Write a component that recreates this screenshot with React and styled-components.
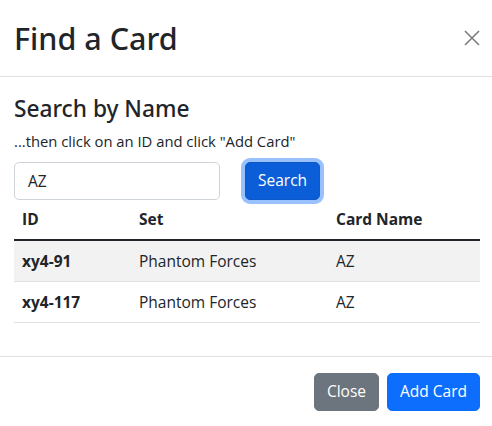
import React, { useState } from "react";
import styled, { createGlobalStyle } from "styled-components";

const GlobalStyle = createGlobalStyle`
  html, body {
    margin: 0;
    padding: 0;
    background: #fff;
  }
  body {
    font-family: "Open Sans", "Noto Sans", sans-serif;
    color: #212529;
    font-size: 16px;
    line-height: 1.5;
  }
  * {
    box-sizing: border-box;
  }
`;

const Modal = styled.div`
  width: 492px;
  height: 426px;
  display: flex;
  flex-direction: column;
  background: #fff;
`;

const Header = styled.div`
  height: 77px;
  display: flex;
  align-items: center;
  justify-content: space-between;
  padding: 0 8px 0 14px;
  border-bottom: 1px solid #dee2e6;
`;

const Title = styled.h1`
  margin: 0;
  font-family: "Noto Sans", "Open Sans", sans-serif;
  font-size: 30.5px;
  font-weight: 500;
  line-height: 1.2;
`;

const CloseIcon = styled.button`
  width: 24px;
  height: 24px;
  padding: 4px;
  border: 0;
  background: transparent;
  opacity: 0.5;
  display: flex;
  align-items: center;
  justify-content: center;
  cursor: pointer;
`;

const Body = styled.div`
  padding: 20px 12px 16px 14px;
`;

const Subtitle = styled.h5`
  margin: 0;
  font-family: "Noto Sans", "Open Sans", sans-serif;
  font-size: 22.7px;
  font-weight: 500;
  line-height: 24px;
`;

const Hint = styled.p`
  margin: 8px 0 0;
  font-size: 14.8px;
  line-height: 24px;
`;

const SearchRow = styled.form`
  display: flex;
  align-items: center;
  gap: 25px;
  margin-top: 9px;
`;

const Input = styled.input`
  width: 206px;
  height: 38px;
  padding: 6px 13px;
  font: inherit;
  font-size: 15.5px;
  color: #212529;
  border: 1px solid #ced4da;
  border-radius: 5px;
  outline: none;
`;

const Button = styled.button`
  height: 38px;
  padding: 0 12px;
  font: inherit;
  font-size: 15.5px;
  color: #fff;
  background: ${(p) => p.$bg};
  border: 1px solid ${(p) => p.$border || p.$bg};
  border-radius: 5px;
  box-shadow: ${(p) => (p.$focus ? "0 0 0 4px rgba(49, 132, 253, 0.5)" : "none")};
  cursor: pointer;
`;

const Table = styled.table`
  width: 100%;
  border-collapse: collapse;
  font-size: 15.5px;
`;

const Th = styled.th`
  text-align: left;
  font-weight: 700;
  padding: 8px 8px;
  line-height: 23px;
  width: ${(p) => p.$w || "auto"};
  border-bottom: 2px solid #212529;
`;

const Row = styled.tr`
  background: ${(p) => (p.$striped ? "#f2f2f2" : "#fff")};
`;

const Td = styled.td`
  padding: 8px 8px;
  line-height: 24px;
  font-weight: ${(p) => (p.$bold ? 700 : 400)};
  border-bottom: 1px solid #dee2e6;
`;

const Footer = styled.div`
  margin-top: auto;
  height: 70px;
  display: flex;
  justify-content: flex-end;
  align-items: flex-start;
  gap: 8px;
  padding: 16px 12px 0 14px;
  border-top: 1px solid #dee2e6;
`;

const results = [
  { id: "xy4-91", set: "Phantom Forces", name: "AZ" },
  { id: "xy4-117", set: "Phantom Forces", name: "AZ" },
];

export default function App() {
  const [query, setQuery] = useState("AZ");

  return (
    <>
      <GlobalStyle />
      <Modal>
        <Header>
          <Title>Find a Card</Title>
          <CloseIcon aria-label="Close">
            <svg width="16" height="16" viewBox="0 0 16 16">
              <path d="M1 1 L15 15 M15 1 L1 15" stroke="#000" strokeWidth="1.6" />
            </svg>
          </CloseIcon>
        </Header>
        <Body>
          <Subtitle>Search by Name</Subtitle>
          <Hint>...then click on an ID and click "Add Card"</Hint>
          <SearchRow onSubmit={(e) => e.preventDefault()}>
            <Input value={query} onChange={(e) => setQuery(e.target.value)} />
            <Button type="submit" $bg="#0b5ed7" $border="#0a58ca" $focus>
              Search
            </Button>
          </SearchRow>
          <Table>
            <thead>
              <tr>
                <Th $w="117px">ID</Th>
                <Th $w="197px">Set</Th>
                <Th>Card Name</Th>
              </tr>
            </thead>
            <tbody>
              {results.map((card, i) => (
                <Row key={card.id} $striped={i % 2 === 0}>
                  <Td $bold>{card.id}</Td>
                  <Td>{card.set}</Td>
                  <Td>{card.name}</Td>
                </Row>
              ))}
            </tbody>
          </Table>
        </Body>
        <Footer>
          <Button type="button" $bg="#6c757d">Close</Button>
          <Button type="button" $bg="#0d6efd">Add Card</Button>
        </Footer>
      </Modal>
    </>
  );
}
